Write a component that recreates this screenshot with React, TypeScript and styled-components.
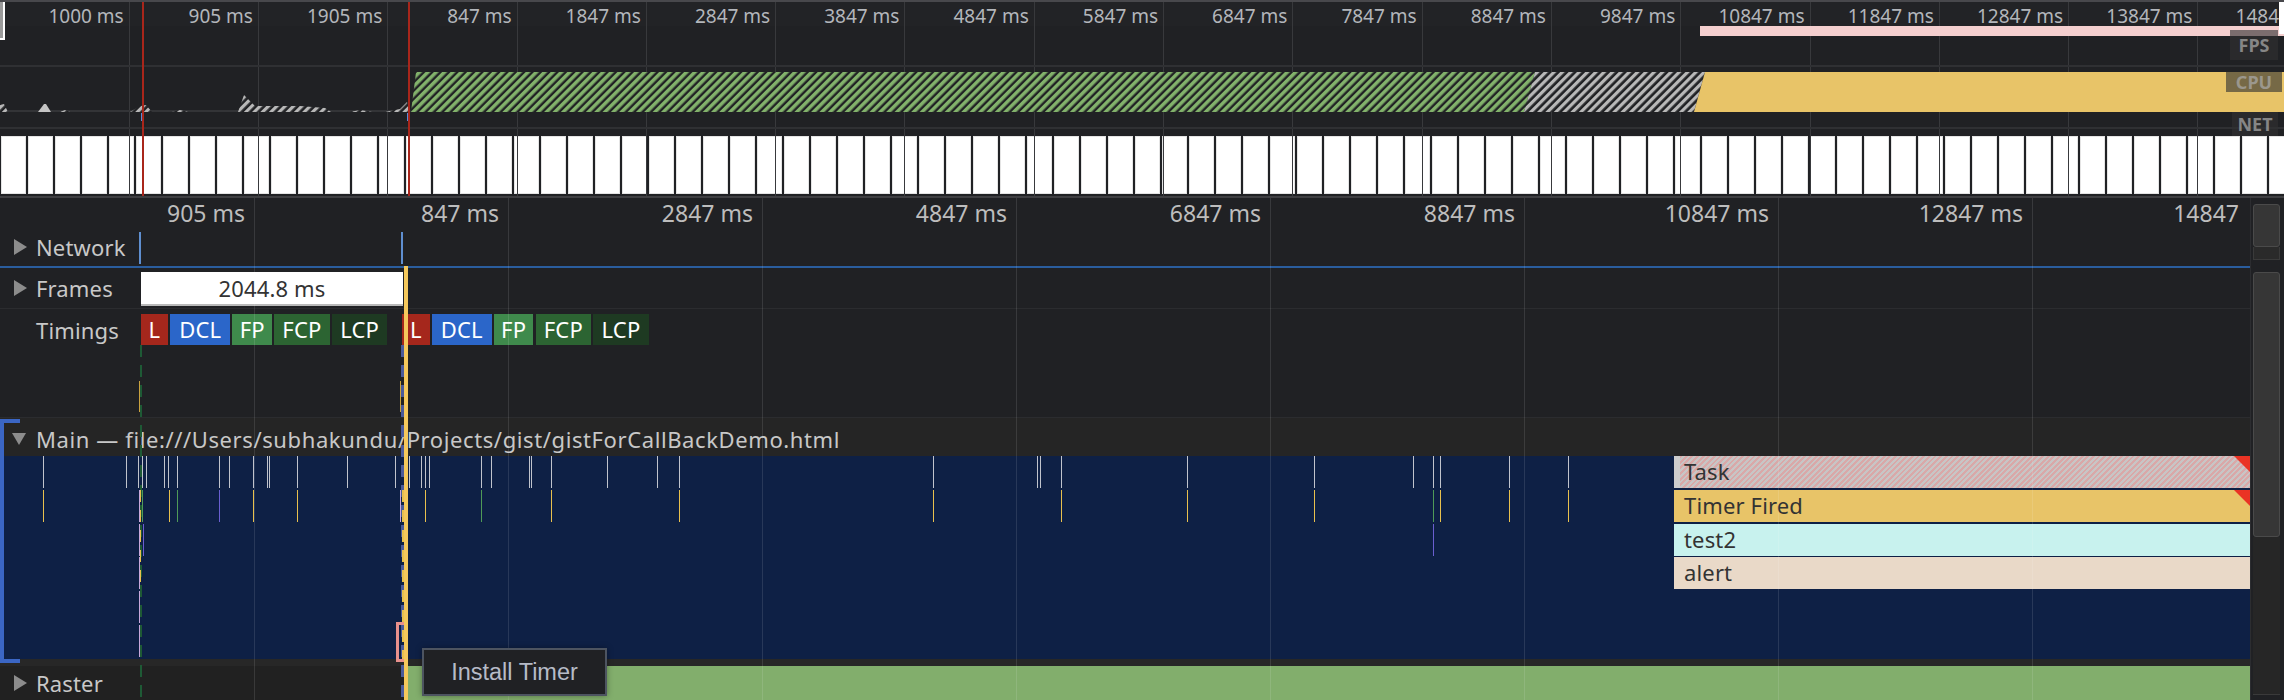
import styled, { createGlobalStyle } from 'styled-components';

const UI_FONT = `'Noto Sans', 'Liberation Sans', sans-serif`;

const OVERVIEW_LABELS = [
  '1000 ms', '905 ms', '1905 ms', '847 ms', '1847 ms', '2847 ms', '3847 ms', '4847 ms', '5847 ms',
  '6847 ms', '7847 ms', '8847 ms', '9847 ms', '10847 ms', '11847 ms', '12847 ms', '13847 ms', '14847 ms',
];
const RULER_LABELS = [
  '905 ms', '847 ms', '2847 ms', '4847 ms', '6847 ms', '8847 ms', '10847 ms', '12847 ms', '14847',
];

const TASK_TICKS = [
  43, 126, 138, 142, 146, 164, 168, 177, 219, 229, 253, 267, 269, 297, 347, 395, 409, 420.5, 424.5, 428.5,
  481, 490.5, 529, 531, 550.5, 607, 657, 679, 932.6, 1036.7, 1040, 1060.7, 1186.7, 1314, 1412.7, 1432.6,
  1440, 1508.7, 1568,
];
const YELLOW = '#e8c04e';
const GREEN = '#4f9a58';
const PURPLE = '#6a5fd0';
const PINK = '#c9a8dc';
const EVENT_TICKS: { x: number; row: number; color: string }[] = [
  { x: 43, row: 1, color: YELLOW },
  { x: 138.7, row: 1, color: PINK },
  { x: 142, row: 1, color: GREEN },
  { x: 169, row: 1, color: YELLOW },
  { x: 177, row: 1, color: GREEN },
  { x: 219, row: 1, color: PURPLE },
  { x: 253, row: 1, color: YELLOW },
  { x: 297, row: 1, color: YELLOW },
  { x: 400.3, row: 1, color: PINK },
  { x: 424.5, row: 1, color: YELLOW },
  { x: 481, row: 1, color: GREEN },
  { x: 550.5, row: 1, color: YELLOW },
  { x: 679, row: 1, color: YELLOW },
  { x: 932.6, row: 1, color: YELLOW },
  { x: 1060.7, row: 1, color: YELLOW },
  { x: 1186.7, row: 1, color: YELLOW },
  { x: 1314, row: 1, color: YELLOW },
  { x: 1432.6, row: 1, color: GREEN },
  { x: 1440, row: 1, color: YELLOW },
  { x: 1508.7, row: 1, color: YELLOW },
  { x: 1568, row: 1, color: YELLOW },
  { x: 1432.6, row: 2, color: PURPLE },
  { x: 138.7, row: 2, color: PINK },
  { x: 142.5, row: 2, color: PURPLE },
  { x: 138.7, row: 3, color: PINK },
  { x: 138.7, row: 4, color: PINK },
  { x: 138.7, row: 5, color: PINK },
];

const TIMING_MARKS = [
  { label: 'L', width: 27.5, color: '#a5271c' },
  { label: 'DCL', width: 60, color: '#2b66c9' },
  { label: 'FP', width: 39.5, color: '#3f8a4c' },
  { label: 'FCP', width: 55.5, color: '#2c6432' },
  { label: 'LCP', width: 55.5, color: '#1e3a22' },
];

const GlobalStyle = createGlobalStyle`
  html, body {
    margin: 0;
    padding: 0;
    background: #202124;
  }
`;

const Page = styled.div`
  position: relative;
  width: 2284px;
  height: 700px;
  overflow: hidden;
  background: #202124;
  font-family: ${UI_FONT};
`;

/* ---- overview strip ---- */

const Overview = styled.div`
  position: relative;
  height: 198px;
  box-sizing: border-box;
  border-top: 2px solid #48484c;
  border-bottom: 2px solid #3f3f42;
  display: flex;
  flex-direction: column;
`;

const OverviewGrid = styled.div`
  position: absolute;
  inset: 0;
  display: flex;
`;

const OverviewCell = styled.div<{ $first?: boolean }>`
  flex: none;
  box-sizing: border-box;
  width: ${(p) => (p.$first ? '129.7px' : '129.3px')};
  border-right: 1.5px solid #38393c;
  padding: 2px 5px 0 0;
  text-align: right;
  font-size: 19px;
  line-height: 24px;
  white-space: nowrap;
  color: #b3b6bb;
`;

const LabelBand = styled.div`
  height: 24px;
  flex: none;
  background: rgba(255, 255, 255, 0.012);
`;

const FpsTrack = styled.div`
  position: relative;
  height: 41px;
  flex: none;
  box-sizing: border-box;
  border-bottom: 2px solid #2f3033;
`;

const FpsBar = styled.div`
  height: 10px;
  margin-left: 1700px;
  background: #f4cfcf;
`;

const CpuTrack = styled.div`
  position: relative;
  height: 62px;
  flex: none;
  box-sizing: border-box;
  padding-top: 5px;
  border-bottom: 2px solid #2f3033;

  svg {
    display: block;
    position: relative;
  }
`;

const CpuBaseline = styled.div`
  position: absolute;
  left: 0;
  right: 0;
  top: 43px;
  height: 2px;
  background: #333437;
`;

const TrackTag = styled.span<{ $top: number; $left: number; $width: number; $height: number }>`
  position: absolute;
  left: ${(p) => p.$left}px;
  top: ${(p) => p.$top}px;
  width: ${(p) => p.$width}px;
  height: ${(p) => p.$height}px;
  line-height: ${(p) => p.$height}px;
  text-align: center;
  font-size: 18px;
  font-weight: 700;
  color: rgba(170, 170, 170, 0.72);
  background: rgba(48, 48, 50, 0.62);
`;

const OverviewTick = styled.i<{ $color: string; $top: number; $height: number }>`
  position: absolute;
  top: ${(p) => p.$top}px;
  height: ${(p) => p.$height}px;
  width: 2px;
  background: ${(p) => p.$color};
`;

const NetBlocks = styled.div`
  display: flex;
  gap: 2px;
  height: 58px;
  flex: none;
  margin-top: 7px;
  padding-left: 1px;
  overflow: hidden;
`;

const NetBlock = styled.div`
  flex: none;
  width: 25px;
  height: 100%;
  box-sizing: border-box;
  background: #fff;
  border: 1px solid #e4e4e4;
`;

const RedLine = styled.div`
  position: absolute;
  top: 0;
  bottom: 0;
  width: 2px;
  background: #a9261b;
`;

const WindowHandle = styled.div<{ $side: 'left' | 'right' }>`
  position: absolute;
  top: 0;
  ${(p) => p.$side}: 0;
  width: 5px;
  height: ${(p) => (p.$side === 'left' ? 38 : 32)}px;
  box-sizing: border-box;
  background: ${(p) => (p.$side === 'left' ? '#9a9a9a' : '#fff')};
  border-bottom: 2px solid #fff;
  ${(p) => (p.$side === 'left' ? 'border-right: 2px solid #fff;' : '')}
`;

/* ---- timeline ---- */

const Lower = styled.div`
  display: flex;
  height: 502px;
`;

const Timeline = styled.div`
  position: relative;
  width: 2250px;
  flex: none;
  overflow: hidden;
  display: flex;
  flex-direction: column;
`;

const RulerGrid = styled.div`
  position: absolute;
  inset: 0;
  display: flex;
  z-index: 3;
  pointer-events: none;
`;

const RulerCell = styled.div<{ $first?: boolean; $last?: boolean }>`
  flex: none;
  box-sizing: border-box;
  width: ${(p) => (p.$first ? '255px' : '254px')};
  border-right: 1.5px solid rgba(255, 255, 255, 0.11);
  padding-right: ${(p) => (p.$last ? 47 : 9)}px;
  text-align: right;
  font-size: 23px;
  line-height: 31px;
  white-space: nowrap;
  color: #bdbdbd;
`;

const Ruler = styled.div`
  height: 29px;
  flex: none;
`;

const Row = styled.div<{ $height: number; $blue?: boolean; $indent?: boolean; $top?: boolean }>`
  position: relative;
  height: ${(p) => p.$height}px;
  flex: none;
  box-sizing: border-box;
  padding-left: ${(p) => (p.$indent ? 36 : 14)}px;
  display: flex;
  align-items: ${(p) => (p.$top ? 'flex-start' : 'center')};
  gap: 9px;
  font-size: 22px;
  letter-spacing: 0.15px;
  line-height: 32px;
  color: #c8c8c8;
  white-space: nowrap;
  border-bottom: ${(p) => (p.$blue ? '2px solid #2a5d9e' : '1px solid #2b2c2f')};
`;

const RowTitle = styled.span<{ $drop?: number }>`
  margin-top: ${(p) => p.$drop ?? 0}px;
`;

const Caret = styled.span<{ $open?: boolean }>`
  flex: none;
  width: 0;
  height: 0;
  ${(p) =>
    p.$open
      ? `border-left: 7.5px solid transparent;
         border-right: 7.5px solid transparent;
         border-top: 12px solid #8c8c8c;`
      : `border-top: 8px solid transparent;
         border-bottom: 8px solid transparent;
         border-left: 13px solid #8c8c8c;`}
`;

const RequestMark = styled.i`
  position: absolute;
  top: 5px;
  height: 32px;
  width: 1.5px;
  background: #5f8fd0;
`;

const FrameBox = styled.div`
  position: absolute;
  left: 141px;
  top: 4px;
  width: 262px;
  height: 34px;
  box-sizing: border-box;
  background: #fff;
  border-bottom: 2px solid #b9b9b9;
  text-align: center;
  line-height: 32px;
  color: #333;
`;

const TimingGroup = styled.div<{ $left: number }>`
  position: absolute;
  left: ${(p) => p.$left}px;
  top: 5px;
  display: flex;
  gap: 2.2px;
`;

const TimingChip = styled.span<{ $width: number; $color: string }>`
  width: ${(p) => p.$width}px;
  height: 31px;
  background: ${(p) => p.$color};
  color: #fff;
  text-align: center;
  line-height: 31px;
`;

const TimingTick = styled.i`
  position: absolute;
  top: 72px;
  height: 31px;
  width: 1px;
  background: #c9a23f;
`;

const MainHeader = styled.div`
  height: 38px;
  flex: none;
  box-sizing: border-box;
  padding: 3px 0 0 12px;
  background: #252525;
  display: flex;
  align-items: center;
  gap: 10px;
  font-size: 22px;
  letter-spacing: 0.6px;
  color: #c8c8c8;
  white-space: nowrap;
`;

const Flame = styled.div`
  position: relative;
  height: 203px;
  flex: none;
  background: #0e2045;
`;

const FlameTick = styled.i<{ $row: number; $color: string }>`
  position: absolute;
  top: ${(p) => p.$row * 33.8}px;
  height: 32px;
  width: 1px;
  background: ${(p) => p.$color};
`;

const FlameStack = styled.div`
  position: absolute;
  left: 1674px;
  right: 0;
  top: 0;
  display: flex;
  flex-direction: column;
  gap: 1.8px;
`;

const FlameBar = styled.div<{ $color: string; $warn?: boolean }>`
  position: relative;
  height: 32px;
  padding-left: 10px;
  background: ${(p) => p.$color};
  font-size: 22px;
  letter-spacing: 0.15px;
  line-height: 31px;
  color: #333;

  &::after {
    content: '';
    display: ${(p) => (p.$warn ? 'block' : 'none')};
    position: absolute;
    right: 0;
    top: 0;
    border-top: 16px solid #ea3324;
    border-left: 16px solid transparent;
  }
`;

const TaskBar = styled(FlameBar)`
  background:
    linear-gradient(#cdcdcd, #cdcdcd) left / 6px 100% no-repeat,
    repeating-linear-gradient(-45deg, #d9a8a8 0 2px, #c8c5c5 2px 4px);
`;

const Gutter = styled.div`
  height: 7px;
  flex: none;
  background: #272727;
`;

const RasterRow = styled.div`
  height: 34px;
  flex: none;
  display: flex;
  background: #212121;
`;

const RasterLabel = styled.div`
  width: 408px;
  flex: none;
  box-sizing: border-box;
  padding-left: 14px;
  display: flex;
  align-items: center;
  gap: 9px;
  font-size: 22px;
  letter-spacing: 0.15px;
  color: #c8c8c8;
`;

const RasterTrack = styled.div`
  flex: 1;
  background: #82ae6c;
`;

const TrackBracket = styled.div`
  position: absolute;
  left: 0;
  top: 221px;
  width: 20px;
  height: 244px;
  box-sizing: border-box;
  z-index: 4;
  background:
    linear-gradient(#3b66c4, #3b66c4) left top / 4px 100% no-repeat,
    linear-gradient(#3b66c4, #3b66c4) left top / 100% 4px no-repeat,
    linear-gradient(#3b66c4, #3b66c4) left bottom / 100% 4px no-repeat;
`;

const DashLine = styled.i<{ $color: string; $width: number; $top: number }>`
  position: absolute;
  top: ${(p) => p.$top}px;
  bottom: 0;
  width: ${(p) => p.$width}px;
  z-index: 4;
  background: repeating-linear-gradient(to bottom, ${(p) => p.$color} 0 12px, transparent 12px 20px);
`;

const Playhead = styled.i`
  position: absolute;
  left: 403.6px;
  top: 68px;
  bottom: 0;
  width: 4.6px;
  z-index: 6;
  background: #f5c85c;
`;

const SelectedEvent = styled.div`
  position: absolute;
  left: 396px;
  top: 424px;
  width: 8px;
  height: 40px;
  box-sizing: border-box;
  z-index: 5;
  border: 3.5px solid #e8908c;
  border-right: none;
`;

const Tooltip = styled.div`
  position: absolute;
  left: 422px;
  top: 648px;
  width: 185px;
  height: 48px;
  box-sizing: border-box;
  z-index: 8;
  background: #202124;
  border: 2px solid rgba(165, 185, 215, 0.34);
  box-shadow: 0 0 6px rgba(0, 0, 0, 0.35);
  text-align: center;
  font-family: 'Liberation Sans', Arial, sans-serif;
  font-size: 23.5px;
  line-height: 44px;
  color: #b6bbc7;
`;

/* ---- scrollbar column ---- */

const ScrollColumn = styled.div`
  width: 34px;
  flex: none;
  box-sizing: border-box;
  padding: 6px 4px 5px 2px;
  border-left: 1px solid #2c2d30;
  display: flex;
  flex-direction: column;
`;

const ScrollThumb = styled.div<{ $height: number }>`
  height: ${(p) => p.$height}px;
  flex: none;
  box-sizing: border-box;
  background: #363636;
  border: 1px solid #4a4a4a;
  border-radius: 3px;
`;

const ScrollStub = styled.div`
  height: 13px;
  flex: none;
  box-sizing: border-box;
  margin-bottom: 12px;
  background: #2a2a2a;
  border: 1px solid #3a3a3a;
  border-top: none;
`;

const ScrollRest = styled.div`
  flex: 1;
  background: #262626;
  border-bottom: 1px solid #3a3a3a;
`;

function CpuChart() {
  const peaks = [
    'M0 40 L0 33 L4 32 L8 40 Z',
    'M60 40 L65 38 L70 40 Z',
    'M130 40 L140 34 L146 33 L152 40 Z',
    'M172 40 L180 38 L188 40 Z',
    'M238 40 L244 23 L255 34 L300 34 L325 36 L331 40 Z',
    'M350 40 L360 38 L372 40 Z',
    'M385 40 L400 37 L407 30 L411 40 Z',
  ];
  return (
    <svg width="2284" height="40" viewBox="0 0 2284 40">
      <defs>
        <pattern id="hatchGreen" width="5.9" height="5.9" patternUnits="userSpaceOnUse" patternTransform="rotate(45)">
          <rect width="5.9" height="5.9" fill="#202124" />
          <rect width="3.5" height="5.9" fill="#82b26b" />
        </pattern>
        <pattern id="hatchGrey" width="5.9" height="5.9" patternUnits="userSpaceOnUse" patternTransform="rotate(45)">
          <rect width="5.9" height="5.9" fill="#202124" />
          <rect width="3.2" height="5.9" fill="#b8b8b8" />
        </pattern>
      </defs>
      {peaks.map((d) => (
        <path key={d} d={d} fill="url(#hatchGrey)" />
      ))}
      <path d="M38 40 L44 32 L46 32 L51 40 Z" fill="#c4c4c4" />
      <path d="M411 40 L416 0 L1535 0 L1524 40 Z" fill="url(#hatchGreen)" />
      <path d="M1524 40 L1535 0 L1705 0 L1694 40 Z" fill="url(#hatchGrey)" />
      <path d="M1694 40 L1705 0 L2284 0 L2284 40 Z" fill="#e8c468" />
    </svg>
  );
}

export default function App() {
  return (
    <>
      <GlobalStyle />
      <Page>
        <Overview>
          <OverviewGrid>
            {OVERVIEW_LABELS.map((label, i) => (
              <OverviewCell key={label} $first={i === 0}>
                {label}
              </OverviewCell>
            ))}
          </OverviewGrid>
          <LabelBand />
          <FpsTrack>
            <FpsBar />
            <OverviewTick $color="#7fb069" style={{ left: 408 }} $top={18} $height={21} />
          </FpsTrack>
          <CpuTrack>
            <CpuBaseline />
            <CpuChart />
            <OverviewTick $color="#5b8bd8" style={{ left: 141 }} $top={46} $height={8} />
            <OverviewTick $color="#5b8bd8" style={{ left: 407 }} $top={46} $height={8} />
          </CpuTrack>
          <NetBlocks>
            {Array.from({ length: 85 }, (_, i) => (
              <NetBlock key={i} />
            ))}
          </NetBlocks>
          <TrackTag $left={2230} $top={28} $width={48} $height={30}>FPS</TrackTag>
          <TrackTag $left={2226} $top={70} $width={56} $height={20}>CPU</TrackTag>
          <TrackTag $left={2232} $top={110} $width={46} $height={24}>NET</TrackTag>
          <RedLine style={{ left: 142 }} />
          <RedLine style={{ left: 408 }} />
          <WindowHandle $side="left" />
          <WindowHandle $side="right" />
        </Overview>

        <Lower>
          <Timeline>
            <Ruler />
            <Row $height={41} $blue>
              <Caret />
              Network
              <RequestMark style={{ left: 139 }} />
              <RequestMark style={{ left: 401 }} />
            </Row>
            <Row $height={41}>
              <Caret />
              Frames
              <FrameBox>2044.8 ms</FrameBox>
            </Row>
            <Row $height={109} $indent $top>
              <RowTitle $drop={5}>Timings</RowTitle>
              {[140.6, 402].map((left) => (
                <TimingGroup key={left} $left={left}>
                  {TIMING_MARKS.map((mark) => (
                    <TimingChip key={mark.label} $width={mark.width} $color={mark.color}>
                      {mark.label}
                    </TimingChip>
                  ))}
                </TimingGroup>
              ))}
              <TimingTick style={{ left: 139 }} />
              <TimingTick style={{ left: 400 }} />
            </Row>
            <MainHeader>
              <Caret $open />
              Main — file:///Users/subhakundu/Projects/gist/gistForCallBackDemo.html
            </MainHeader>
            <Flame>
              {TASK_TICKS.map((x) => (
                <FlameTick key={x} $row={0} $color="#c0c3cc" style={{ left: x }} />
              ))}
              {EVENT_TICKS.map((tick) => (
                <FlameTick key={`${tick.x}-${tick.row}`} $row={tick.row} $color={tick.color} style={{ left: tick.x }} />
              ))}
              <FlameStack>
                <TaskBar $color="#c8c5c5" $warn>Task</TaskBar>
                <FlameBar $color="#e8c468" $warn>Timer Fired</FlameBar>
                <FlameBar $color="#c8f2ee">test2</FlameBar>
                <FlameBar $color="#e9d9c8">alert</FlameBar>
              </FlameStack>
            </Flame>
            <Gutter />
            <RasterRow>
              <RasterLabel>
                <Caret />
                Raster
              </RasterLabel>
              <RasterTrack />
            </RasterRow>

            <RulerGrid>
              {RULER_LABELS.map((label, i) => (
                <RulerCell key={label} $first={i === 0} $last={i === RULER_LABELS.length - 1}>
                  {label}
                </RulerCell>
              ))}
            </RulerGrid>
            <TrackBracket />
            <DashLine $color="#1e5a35" $width={2} $top={147} style={{ left: 140 }} />
            <DashLine $color="#e8c04e" $width={1.5} $top={292} style={{ left: 139.6, bottom: 110 }} />
            <DashLine $color="#4a5a9a" $width={3} $top={147} style={{ left: 401 }} />
            <DashLine $color="#e8c04e" $width={1.5} $top={292} style={{ left: 402, bottom: 40 }} />
            <SelectedEvent />
            <Playhead />
          </Timeline>
          <ScrollColumn>
            <ScrollThumb $height={43} />
            <ScrollStub />
            <ScrollThumb $height={265} />
            <ScrollRest />
          </ScrollColumn>
        </Lower>
        <Tooltip>Install Timer</Tooltip>
      </Page>
    </>
  );
}
